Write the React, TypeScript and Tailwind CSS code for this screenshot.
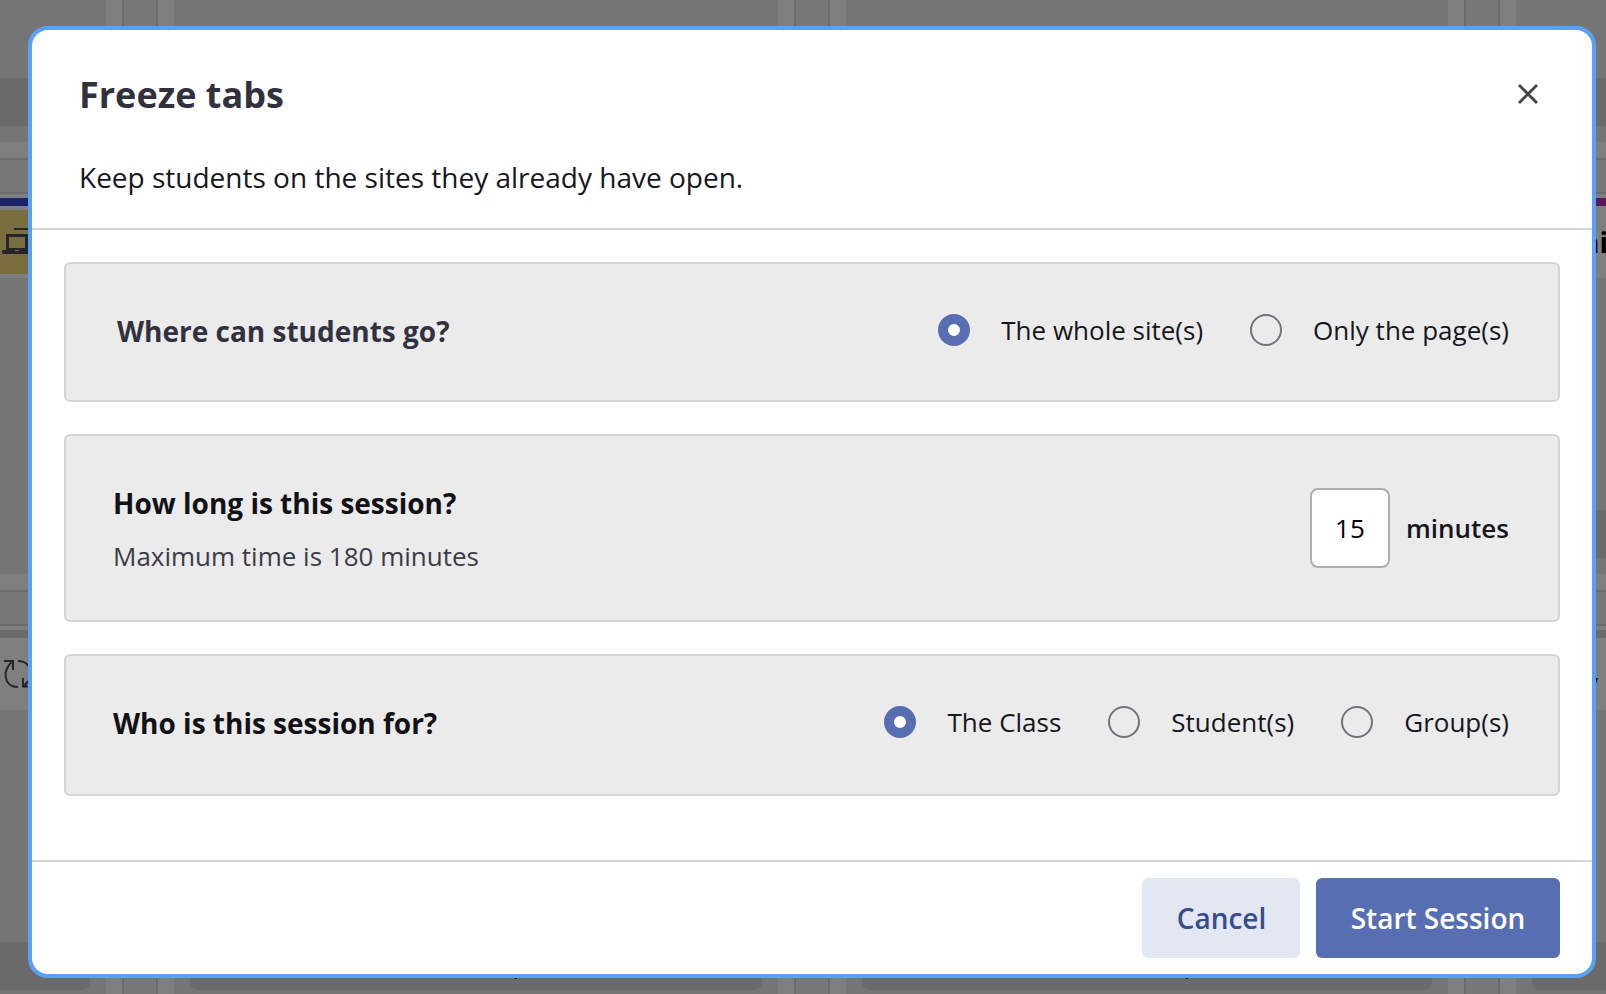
import { useState } from "react";
import type { ReactNode } from "react";

function Radio({
    label,
    checked,
    onSelect,
}: {
    label: string;
    checked: boolean;
    onSelect: () => void;
}) {
    return (
        <label className="flex items-center gap-[31.25px] text-[26px] leading-9 text-[#16161d]">
            <input
                type="radio"
                checked={checked}
                onChange={onSelect}
                className="size-8 shrink-0 appearance-none rounded-full border-2 border-[#72727c] checked:border-10 checked:border-[#586eb2] checked:bg-white"
            />
            <span className="whitespace-nowrap">{label}</span>
        </label>
    );
}

function Panel({ className, children }: { className: string; children: ReactNode }) {
    return (
        <section
            className={`flex items-center justify-between rounded-md border-2 border-[#d5d5d5] bg-[#ebebeb] pr-[49px] ${className}`}
        >
            {children}
        </section>
    );
}

function Gutter() {
    return (
        <div className="flex w-[68px] shrink-0 bg-[#7f7f7f] px-4">
            <div className="flex-1 border-x-2 border-[#6b6b6b] bg-[#787878]" />
        </div>
    );
}

function RowGap() {
    return (
        <div className="h-[68px] shrink-0 bg-[#7f7f7f] pt-4">
            <div className="h-9 border-y-2 border-[#6b6b6b] bg-[#787878]" />
        </div>
    );
}

function StudentColumn({
    className,
    stripe,
    header,
    status,
    footer,
    footerClass = "mx-4 rounded-b-lg",
    thumb = "",
}: {
    className: string;
    stripe: string;
    header?: ReactNode;
    status?: ReactNode;
    footer?: string;
    footerClass?: string;
    thumb?: string;
}) {
    return (
        <div className={`flex shrink-0 flex-col overflow-hidden bg-[#757575] ${className}`}>
            <div className="mt-[78px] h-12 shrink-0 bg-[#6a6a6a]" />
            <div className="mt-4 -mb-3 shrink-0">
                <RowGap />
            </div>
            <div className={`h-2 shrink-0 ${stripe}`} />
            <div className="h-[72px] shrink-0 bg-[#7f7f7f]">{header}</div>
            <div className={`mt-[232px] h-12 shrink-0 ${thumb}`} />
            <div className="mt-4 -mb-3 shrink-0">
                <RowGap />
            </div>
            <div className="h-2 shrink-0 bg-[#6a6a6a]" />
            <div className="h-[72px] shrink-0 bg-[#7f7f7f]">{status}</div>
            <div className={`mt-[232px] h-12 shrink-0 bg-[#6a6a6a] ${footerClass}`}>
                {footer && (
                    <p className="pl-[82px] text-center text-[28px] leading-[44px] text-black">{footer}</p>
                )}
            </div>
        </div>
    );
}

function LaptopIcon() {
    return (
        <svg className="mt-[14px] ml-[2px] h-8 w-10 text-[#25252b]" viewBox="0 0 40 32" fill="none">
            <path d="M12 5h26v20" stroke="currentColor" strokeWidth="2" />
            <path d="M5.5 11.5h19v14h-19z" stroke="currentColor" strokeWidth="3" />
            <path d="M0 26h30v2q0 2-2 2H2q-2 0-2-2z" fill="currentColor" />
            <path d="M13 26.5h4" stroke="#7a6d40" />
        </svg>
    );
}

function SyncIcon() {
    return (
        <svg className="mt-[20px] ml-[4px] h-[32px] w-[32px] text-[#25252b]" viewBox="0 0 32 32" fill="none">
            <path
                d="M0 3h9v9M8.500 3.500C-2 11-1 29 14 29M14 3c14 0 17 17 6 25M19 20v8.500h9M19.500 28l6-6"
                stroke="currentColor"
                strokeWidth="2"
            />
        </svg>
    );
}

function Classroom() {
    return (
        <div className="flex h-full w-full" aria-hidden="true">
            <StudentColumn
                className="w-[106px]"
                stripe="bg-[#1a2369]"
                footerClass="mr-4 rounded-br-lg"
                header={
                    <div className="flex h-full flex-col pt-1 pb-1">
                        <div className="h-16 bg-[#7a6d40]">
                            <LaptopIcon />
                        </div>
                    </div>
                }
                status={<SyncIcon />}
            />
            <Gutter />
            <StudentColumn className="w-[604px]" stripe="bg-[#1a2369]" footer="," />
            <Gutter />
            <StudentColumn className="w-[602px]" stripe="bg-[#1a2369]" footer="," />
            <Gutter />
            <StudentColumn
                className="w-[90px]"
                stripe="bg-[#5c175c]"
                thumb="bg-[#6a6a6a]"
                footerClass="ml-4 rounded-bl-lg"
                header={
                    <span className="ml-[65px] block pt-[17px] text-[28px] leading-[38px] font-bold whitespace-nowrap text-black">
                        ni
                    </span>
                }
                status={
                    <span className="ml-[66px] block pt-[26px] text-[28px] leading-[38px] font-bold text-black">
                        y
                    </span>
                }
            />
        </div>
    );
}

export default function App() {
    const [scope, setScope] = useState("site");
    const [audience, setAudience] = useState("class");
    const [minutes, setMinutes] = useState("15");

    return (
        <div className="relative h-[994px] w-[1606px] overflow-hidden bg-[#757575] font-['Open_Sans','Noto_Sans',sans-serif]">
            <Classroom />

            <div
                role="dialog"
                aria-labelledby="freeze-title"
                className="absolute top-[26px] left-[28px] flex h-[952px] w-[1568px] flex-col rounded-[20px] border-4 border-[#58a2f6] bg-white"
            >
                <header className="h-[200px] shrink-0 border-b-2 border-[#d5d5d5] px-[47px] pt-10">
                    <div className="flex items-center justify-between">
                        <h1 id="freeze-title" className="text-[36px] leading-[50px] font-bold text-[#32323e]">
                            Freeze tabs
                        </h1>
                        <button aria-label="Close" className="mr-[7.5px] mb-[3px]">
                            <svg className="size-5 text-[#41414b]" viewBox="0 0 20 20">
                                <path d="M1 1l18 18M19 1L1 19" stroke="currentColor" strokeWidth="2.8" />
                            </svg>
                        </button>
                    </div>
                    <p className="mt-[37px] text-[28px] leading-[40px] text-[#16161d]">
                        Keep students on the sites they already have open.
                    </p>
                </header>

                <main className="flex flex-1 flex-col gap-8 px-8 pt-8">
                    <Panel className="h-[140px] pl-[51px]">
                        <h2 className="mb-0.5 text-[28px] leading-10 font-bold text-[#32323e]">
                            Where can students go?
                        </h2>
                        <div className="mb-1 flex gap-[46.75px]">
                            <Radio
                                label="The whole site(s)"
                                checked={scope === "site"}
                                onSelect={() => setScope("site")}
                            />
                            <Radio
                                label="Only the page(s)"
                                checked={scope === "page"}
                                onSelect={() => setScope("page")}
                            />
                        </div>
                    </Panel>

                    <Panel className="h-[188px] pl-[47px]">
                        <div className="pt-0.5">
                            <h2 className="text-[28px] leading-10 font-bold text-[#111116]">
                                How long is this session?
                            </h2>
                            <p className="mt-[14px] text-[26px] leading-[38px] text-[#3b3b48]">
                                Maximum time is 180 minutes
                            </p>
                        </div>
                        <div className="flex items-center gap-4">
                            <input
                                value={minutes}
                                onChange={(e) => setMinutes(e.target.value)}
                                aria-label="Session length"
                                className="size-20 rounded-lg border-2 border-[#adadb5] bg-white text-center text-[26px] text-black"
                            />
                            <span className="text-[26px] leading-9 font-semibold text-[#16161d]">minutes</span>
                        </div>
                    </Panel>

                    <Panel className="h-[142px] pb-0.5 pl-[47px]">
                        <h2 className="mb-0.5 text-[28px] leading-10 font-bold text-[#111116]">
                            Who is this session for?
                        </h2>
                        <div className="mb-1 flex gap-[46.75px]">
                            <Radio
                                label="The Class"
                                checked={audience === "class"}
                                onSelect={() => setAudience("class")}
                            />
                            <Radio
                                label="Student(s)"
                                checked={audience === "student"}
                                onSelect={() => setAudience("student")}
                            />
                            <Radio
                                label="Group(s)"
                                checked={audience === "group"}
                                onSelect={() => setAudience("group")}
                            />
                        </div>
                    </Panel>
                </main>

                <footer className="flex h-[114px] shrink-0 justify-end gap-4 border-t-2 border-[#d5d5d5] px-8 pt-4">
                    <button className="h-20 w-[158px] rounded-md bg-[#e3e7f2] pb-px pl-px text-[28px] leading-10 font-semibold text-[#384d8c]">
                        Cancel
                    </button>
                    <button className="h-20 w-[244px] rounded-md bg-[#586eb2] pb-px text-[28px] leading-10 font-semibold text-white">
                        Start Session
                    </button>
                </footer>
            </div>
        </div>
    );
}
